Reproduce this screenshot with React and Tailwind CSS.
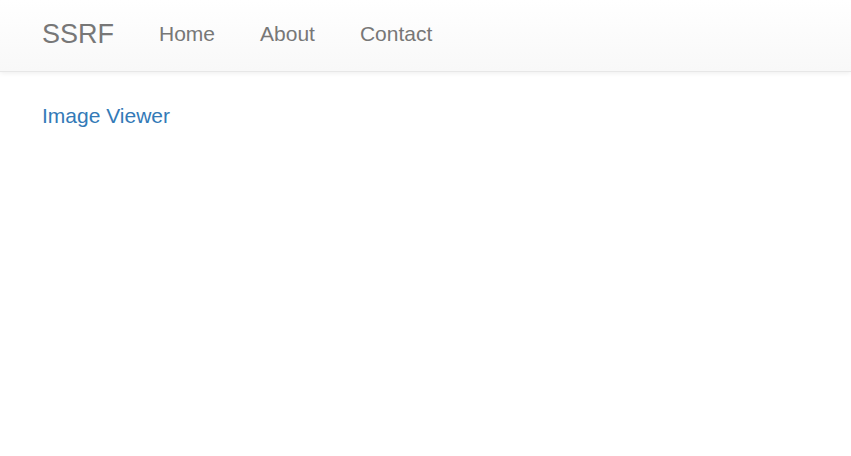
const App = () => {
    const links = ["Home", "About", "Contact"];

    return (
        <div className="min-h-screen bg-white font-['Liberation_Sans',Arial,sans-serif]">
            <nav className="h-[72px] border-b border-[#e7e7e7] bg-gradient-to-b from-white to-[#f8f8f8] shadow-[0_1px_5px_rgba(0,0,0,0.075)]">
                <div className="flex h-[68px] items-center px-[21px]">
                    <a href="#" className="pl-[21px] pr-[22.5px] text-[27px] leading-[28px] text-[#777]">SSRF</a>
                    <ul className="flex">
                        {links.map((link) => (
                            <li key={link}>
                                <a href="#" className="block px-[22.5px] text-[21px] leading-[28px] text-[#777]">{link}</a>
                            </li>
                        ))}
                    </ul>
                </div>
            </nav>

            <div className="px-[42px] pt-[30px]">
                <a href="#" className="text-[21px] leading-[28px] text-[#337ab7]">Image Viewer</a>
            </div>
        </div>
    );
};

export default App;
